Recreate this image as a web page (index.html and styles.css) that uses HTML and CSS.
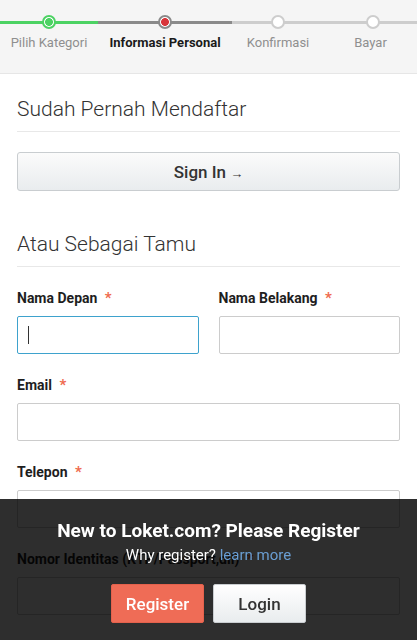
FILE: index.html
```html
<!DOCTYPE html>
<html lang="id">
<head>
<meta charset="utf-8">
<title>Loket - Informasi Personal</title>
<link rel="stylesheet" href="styles.css">
</head>
<body>
<div class="stepper">
  <div class="step done">
    <div class="track"><span class="dot"></span></div>
    <div class="label">Pilih Kategori</div>
  </div>
  <div class="step current">
    <div class="track"><span class="dot"></span></div>
    <div class="label">Informasi Personal</div>
  </div>
  <div class="step">
    <div class="track"><span class="dot"></span></div>
    <div class="label">Konfirmasi</div>
  </div>
  <div class="step">
    <div class="track"><span class="dot"></span></div>
    <div class="label">Bayar</div>
  </div>
</div>

<main class="content">
  <h2 class="section-title">Sudah Pernah Mendaftar</h2>
  <button class="btn-signin">Sign In <span class="arrow">→</span></button>

  <h2 class="section-title guest">Atau Sebagai Tamu</h2>

  <div class="row">
    <div class="field">
      <label class="field-label">Nama Depan <span class="req">*</span></label>
      <div class="input focused"><span class="caret"></span></div>
    </div>
    <div class="field">
      <label class="field-label">Nama Belakang <span class="req">*</span></label>
      <div class="input"></div>
    </div>
  </div>

  <div class="field">
    <label class="field-label">Email <span class="req">*</span></label>
    <div class="input"></div>
  </div>

  <div class="field">
    <label class="field-label">Telepon <span class="req">*</span></label>
    <div class="input"></div>
  </div>

  <div class="field">
    <label class="field-label">Nomor Identitas (KTP/Passport,dll) <span class="req">*</span></label>
    <div class="input"></div>
  </div>
</main>

<div class="register-bar">
  <div class="rb-title">New to Loket.com? Please Register</div>
  <div class="rb-sub">Why register? <a class="rb-link">learn more</a></div>
  <div class="rb-actions">
    <button class="btn-register">Register</button>
    <button class="btn-login">Login</button>
  </div>
</div>
</body>
</html>
```

FILE: styles.css
```css
* { box-sizing: border-box; }
html, body {
  margin: 0;
  padding: 0;
  background: #fff;
  font-family: Roboto, "Noto Sans", "Liberation Sans", sans-serif;
  color: #222;
  width: 417px;
  height: 640px;
  overflow: hidden;
}

.stepper {
  display: grid;
  grid-template-columns: 98px 134px 92px 93px;
  background: #f5f5f5;
  border-bottom: 1px solid #e6e6e6;
  height: 74px;
  padding-top: 15px;
}
.step {
  display: flex;
  flex-direction: column;
  align-items: center;
}
.step:last-child .track .dot { left: 2px; }
.track {
  position: relative;
  width: 100%;
  height: 14px;
  display: flex;
  align-items: center;
  justify-content: center;
}
.track::before {
  content: "";
  position: absolute;
  left: 0;
  right: 0;
  top: 6px;
  height: 3px;
  background: #cdcdcd;
}
.done .track::before { background: #4cd263; }
.current .track::before { background: #8a8a8a; }
.dot {
  position: relative;
  width: 14px;
  height: 14px;
  border-radius: 50%;
  border: 2px solid #cdcdcd;
  background: #fff;
}
.done .dot {
  border-color: #4cd263;
  background: radial-gradient(circle, #4cd263 0 3.6px, #fff 4.2px);
}
.current .dot {
  border-color: #8a8a8a;
  background: radial-gradient(circle, #d8353a 0 3.6px, #fff 4.2px);
}
.label {
  margin-top: 6px;
  font-size: 13px;
  color: #8f8f8f;
  white-space: nowrap;
}
.current .label {
  color: #1a1a1a;
  font-weight: 700;
}

.content {
  padding: 22px 17px 0;
}
.section-title {
  margin: 0;
  font-weight: 300;
  font-size: 21px;
  color: #333;
  padding-bottom: 8px;
  border-bottom: 1px solid #e8e8e8;
  line-height: 27px;
}
.section-title.guest {
  margin-top: 40px;
}
.btn-signin {
  display: block;
  width: 100%;
  height: 39px;
  margin-top: 20px;
  border: 1px solid #c9cdd0;
  border-radius: 3px;
  background: linear-gradient(#fbfbfb, #e9ecee);
  font-family: inherit;
  font-size: 17px;
  font-weight: 500;
  color: #333;
}
.btn-signin .arrow {
  font-size: 13px;
  font-weight: 400;
}

.row {
  display: grid;
  grid-template-columns: 1fr 1fr;
  gap: 20px;
}
.field {
  margin-top: 21px;
}
.field-label {
  display: block;
  font-size: 14px;
  font-weight: 700;
  color: #1e1e1e;
  line-height: 20px;
  margin-bottom: 8px;
}
.req {
  color: #ef6b4e;
  font-size: 15px;
  margin-left: 4px;
}
.input {
  height: 38px;
  border: 1px solid #cccccc;
  border-radius: 2px;
  background: #fff;
  display: flex;
  align-items: center;
  padding-left: 10px;
}
.input.focused {
  border-color: #3ea2cd;
}
.caret {
  width: 1px;
  height: 18px;
  background: #333;
}

.register-bar {
  position: fixed;
  left: 0;
  right: 0;
  bottom: 0;
  height: 141px;
  background: rgba(0, 0, 0, 0.82);
  display: flex;
  flex-direction: column;
  align-items: center;
  padding-top: 20px;
}
.rb-title {
  color: #fff;
  font-size: 19px;
  font-weight: 700;
  line-height: 23px;
}
.rb-sub {
  color: #fff;
  font-size: 15px;
  line-height: 20px;
  margin-top: 3px;
}
.rb-link {
  color: #6a9ed3;
}
.rb-actions {
  display: flex;
  gap: 9px;
  margin-top: 19px;
}
.rb-actions button {
  width: 93px;
  height: 39px;
  border-radius: 2px;
  font-family: inherit;
  font-size: 17px;
  font-weight: 500;
}
.btn-register {
  background: #ef6c56;
  border: 1px solid #e4614c;
  color: #fff;
}
.btn-login {
  background: linear-gradient(#ffffff, #e9ecee);
  border: 1px solid #c9cdd0;
  color: #333;
}
```
